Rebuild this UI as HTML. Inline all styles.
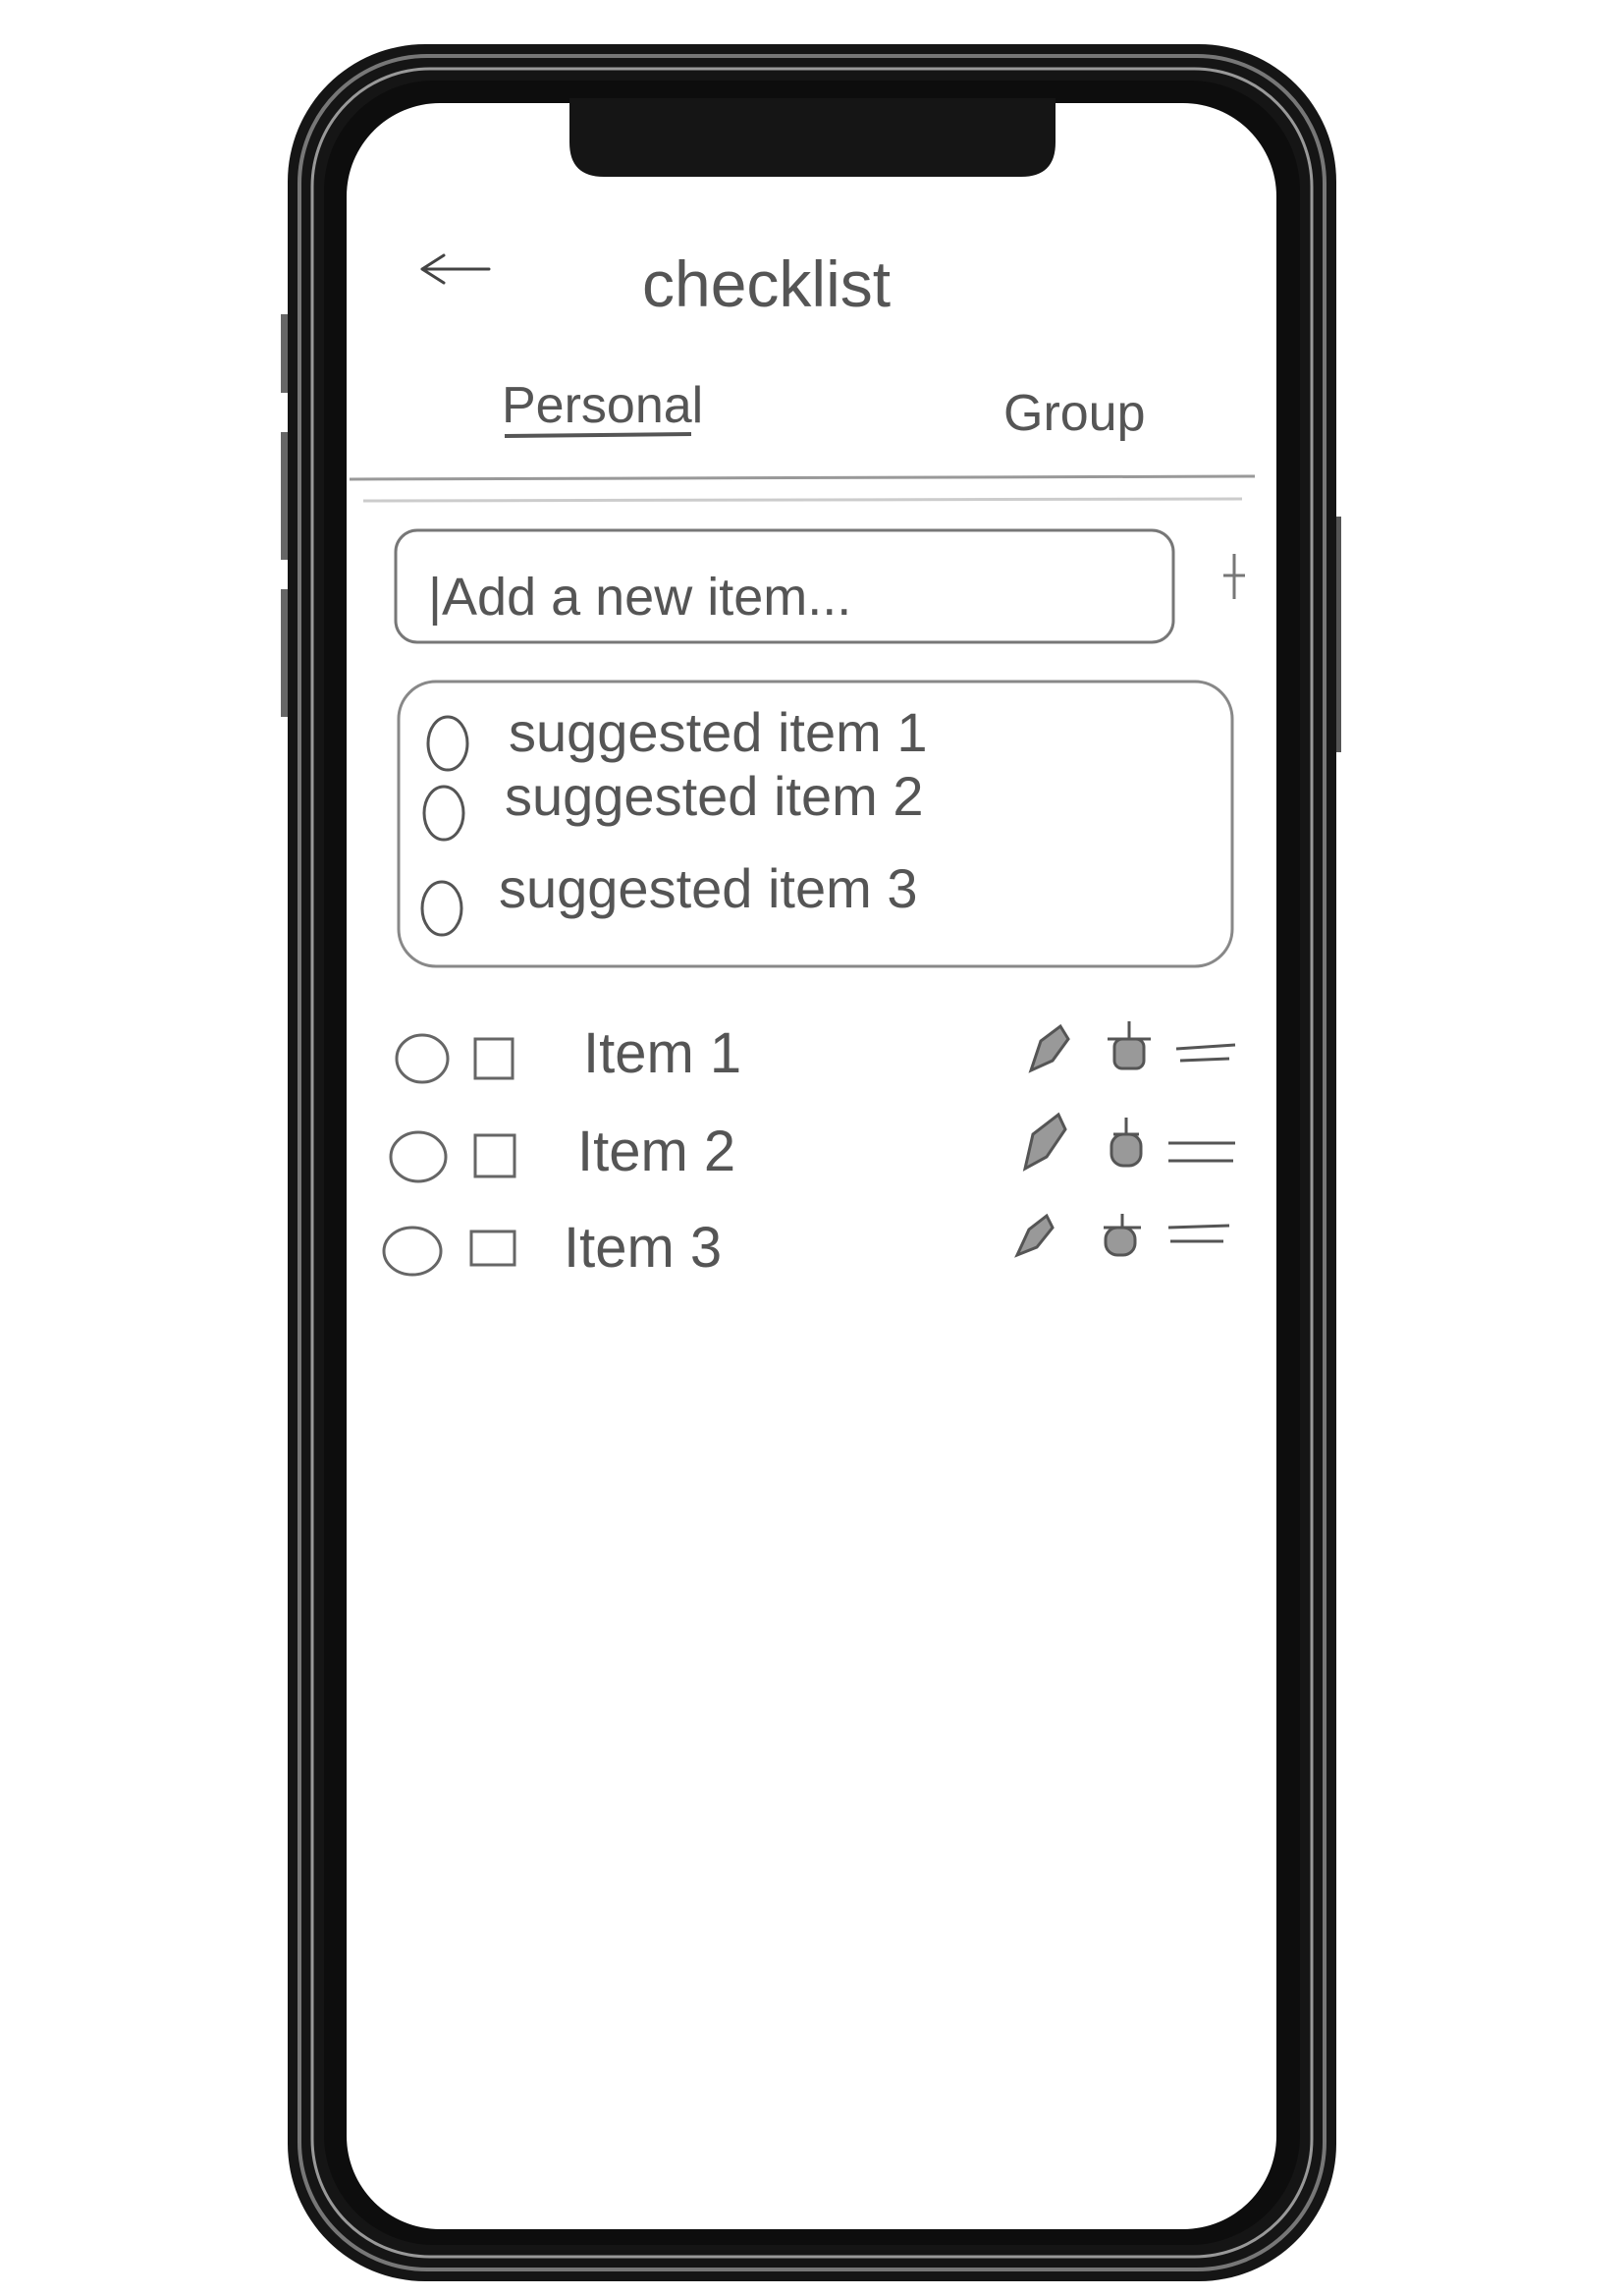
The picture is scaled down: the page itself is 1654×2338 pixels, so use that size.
<!DOCTYPE html>
<html><head><meta charset="utf-8"><style>
html,body{margin:0;padding:0;background:#fff;}
svg{display:block}
text{font-family:"Liberation Sans",sans-serif;fill:#555;}
</style></head><body>
<svg width="1654" height="2338" viewBox="0 0 1654 2338" xmlns="http://www.w3.org/2000/svg">
<rect width="1654" height="2338" fill="#fff"/>
<rect x="286" y="320" width="10" height="80" fill="#666"/>
<rect x="286" y="440" width="10" height="130" fill="#666"/>
<rect x="286" y="600" width="10" height="130" fill="#666"/>
<rect x="1356" y="526" width="10" height="240" fill="#555"/>
<rect x="293" y="45" width="1068" height="2278" rx="140" fill="#151515"/>
<rect x="305" y="57" width="1044" height="2254" rx="130" fill="none" stroke="#777" stroke-width="4"/>
<rect x="318" y="70" width="1018" height="2228" rx="120" fill="none" stroke="#999" stroke-width="3"/>
<rect x="330" y="82" width="994" height="2204" rx="112" fill="#0d0d0d"/>
<rect x="353" y="105" width="947" height="2165" rx="95" fill="#fff"/>
<path d="M580 100 L1075 100 L1075 145 Q1075 180 1040 180 L615 180 Q580 180 580 145 Z" fill="#151515"/>
<path d="M430 274 L498 274 M430 274 L452 260 M430 274 L452 288" stroke="#444" stroke-width="3" fill="none" stroke-linecap="round"/>
<text x="654" y="312" font-size="66" fill="#333">checklist</text>
<text x="511" y="430" font-size="52" fill="#555">Personal</text>
<path d="M514 444 L704 442" stroke="#555" stroke-width="4"/>
<text x="1022" y="438" font-size="52" fill="#555">Group</text>
<path d="M356 488 L1278 485" stroke="#999" stroke-width="3"/>
<path d="M370 510 L1265 508" stroke="#ccc" stroke-width="3"/>
<rect x="403" y="540" width="792" height="114" rx="22" fill="none" stroke="#777" stroke-width="3"/>
<text x="436" y="626" font-size="54" fill="#777">|Add a new item...</text>
<path d="M1246 586 L1268 586 M1257 564 L1257 610" stroke="#777" stroke-width="3"/>
<rect x="406" y="694" width="849" height="290" rx="38" fill="none" stroke="#888" stroke-width="3"/>
<ellipse cx="456" cy="757" rx="20" ry="27" fill="none" stroke="#555" stroke-width="3"/>
<ellipse cx="452" cy="828" rx="20" ry="27" fill="none" stroke="#555" stroke-width="3"/>
<ellipse cx="450" cy="925" rx="20" ry="27" fill="none" stroke="#555" stroke-width="3"/>
<text x="518" y="765" font-size="56" fill="#555">suggested item 1</text>
<text x="514" y="830" font-size="56" fill="#555">suggested item 2</text>
<text x="508" y="924" font-size="56" fill="#555">suggested item 3</text>
<g fill="none" stroke="#666" stroke-width="3">
<ellipse cx="430" cy="1078" rx="26" ry="24"/>
<rect x="484" y="1058" width="38" height="40"/>
<ellipse cx="426" cy="1178" rx="28" ry="25"/>
<rect x="484" y="1156" width="40" height="42"/>
<ellipse cx="420" cy="1274" rx="29" ry="24"/>
<rect x="480" y="1254" width="44" height="34"/>
</g>
<text x="594" y="1092" font-size="58" fill="#666">Item 1</text>
<text x="588" y="1192" font-size="58" fill="#666">Item 2</text>
<text x="574" y="1290" font-size="58" fill="#666">Item 3</text>
<g stroke="#555" stroke-width="3" fill="#999">
<path d="M1050 1090 L1060 1060 L1080 1045 L1088 1058 L1072 1080 Z"/>
<path d="M1044 1190 L1052 1155 L1078 1135 L1085 1150 L1066 1178 Z"/>
<path d="M1036 1278 L1048 1252 L1066 1238 L1072 1250 L1056 1270 Z"/>
<rect x="1135" y="1058" width="30" height="30" rx="8"/>
<path d="M1128 1058 L1172 1058 M1150 1058 L1150 1040" fill="none"/>
<rect x="1132" y="1155" width="30" height="32" rx="12"/>
<path d="M1134 1155 L1160 1155 M1147 1155 L1147 1138" fill="none"/>
<rect x="1126" y="1250" width="30" height="28" rx="12"/>
<path d="M1124 1250 L1162 1250 M1143 1250 L1143 1236" fill="none"/>
<path d="M1198 1068 L1258 1064 M1202 1080 L1252 1078 M1190 1164 L1258 1164 M1190 1182 L1256 1182 M1190 1250 L1252 1248 M1192 1264 L1246 1264" fill="none"/>
</g>
</svg>
</body></html>
